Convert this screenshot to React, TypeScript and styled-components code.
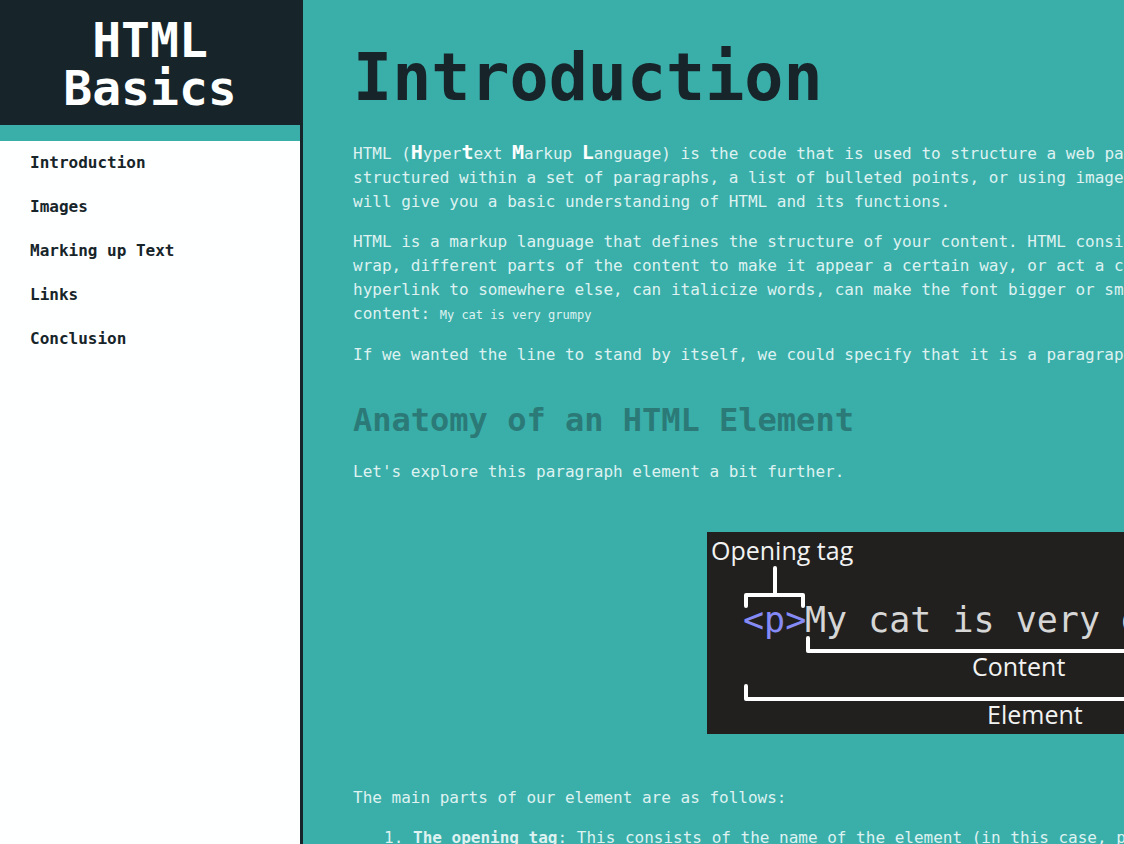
import React from "react";
import styled, { createGlobalStyle } from "styled-components";

const color = {
  ink: "#17252a",
  teal: "#3aafa9",
  deepTeal: "#2b7a78",
  mist: "#def2f1",
  paper: "#feffff",
};

const mono = `"DejaVu Sans Mono", "Liberation Mono", monospace`;

const GlobalStyle = createGlobalStyle`
  * { box-sizing: border-box; }
  body {
    margin: 0;
    background: ${color.teal};
    color: ${color.mist};
    font-family: ${mono};
    font-size: 16px;
    line-height: 24px;
  }
`;

const Page = styled.div`
  display: grid;
  grid-template-columns: 303px minmax(0, 1fr);
  height: 100vh;
`;

const Sidebar = styled.nav`
  background: ${color.paper};
  border-right: 3px solid ${color.ink};
`;

const SiteTitle = styled.header`
  padding: 16px 48px 13px;
  background: ${color.ink};
  border-bottom: 16px solid ${color.teal};
  color: ${color.paper};
  font-size: 48px;
  font-weight: 700;
  line-height: 48px;
  text-align: center;
`;

const NavLink = styled.a`
  display: block;
  padding: 10px 30px;
  color: ${color.ink};
  font-weight: 700;
  text-decoration: none;
`;

const Main = styled.main`
  padding: 30px 50px;
  overflow: auto;
  scrollbar-width: none;
`;

const Article = styled.article`
  min-width: 1336px;
`;

const Title = styled.h1`
  margin: 0 0 14px;
  color: ${color.ink};
  font-size: 65px;
  line-height: 96px;
`;

const Heading = styled.h2`
  margin: 30px 0 16px;
  color: ${color.deepTeal};
  font-size: 32px;
  line-height: 47px;
`;

const Text = styled.p`
  margin: 0 0 16px;
`;

const Initial = styled.strong`
  color: ${color.paper};
  font-size: 20px;
`;

const Code = styled.code`
  font-family: ${mono};
  font-size: 12px;
`;

const Figure = styled.figure`
  display: flex;
  justify-content: center;
  margin: 48px 0 52px;
`;

const Diagram = styled.svg`
  display: block;
  background: #21201e;
`;

const Label = styled.text`
  fill: #f2f2f2;
  font-family: "Open Sans", sans-serif;
  font-size: 25px;
`;

const Sample = styled.text<{ $tag?: boolean }>`
  fill: ${(p) => (p.$tag ? "#858af5" : "#d6d6d6")};
  font-family: ${mono};
  font-size: 35px;
`;

const Parts = styled.ol`
  margin: 0;
  padding-left: 60px;
`;

const links = [
  ["Introduction", "#introduction"],
  ["Images", "#images"],
  ["Marking up Text", "#marking-up-text"],
  ["Links", "#links"],
  ["Conclusion", "#conclusion"],
];

function ElementDiagram() {
  return (
    <Diagram width="628" height="202" viewBox="0 0 628 202" role="img" aria-label="Anatomy of a paragraph element">
      <Label x="4" y="28">Opening tag</Label>
      <Label x="478" y="28">Closing tag</Label>
      <Sample $tag x="36" y="100">&lt;p&gt;</Sample>
      <Sample x="98" y="100">My cat is very grumpy</Sample>
      <Sample $tag x="541" y="100">&lt;/p&gt;</Sample>
      <g fill="none" stroke="#ffffff" strokeWidth="4" strokeLinecap="round" strokeLinejoin="round">
        <path d="M68 36V63M39 74V63H96V74" />
        <path d="M582 36V63M543 74V63H622V74" />
        <path d="M101 106V119H538V106" />
        <path d="M39 154V167H622V154" />
      </g>
      <Label x="265" y="144">Content</Label>
      <Label x="280" y="192">Element</Label>
    </Diagram>
  );
}

export default function App() {
  return (
    <>
      <GlobalStyle />
      <Page>
        <Sidebar>
          <SiteTitle>HTML Basics</SiteTitle>
          {links.map(([label, href]) => (
            <NavLink key={href} href={href}>{label}</NavLink>
          ))}
        </Sidebar>
        <Main>
          <Article id="introduction">
            <Title>Introduction</Title>
            <Text>
              HTML (<Initial>H</Initial>yper<Initial>t</Initial>ext <Initial>M</Initial>arkup{" "}
              <Initial>L</Initial>anguage) is the code that is used to structure a web page and its
              content. For example, content could be structured within a set of paragraphs, a list of
              bulleted points, or using images and data tables. As the title suggests, this article
              will give you a basic understanding of HTML and its functions.
            </Text>
            <Text>
              HTML is a markup language that defines the structure of your content. HTML consists of a
              series of elements, which you use to enclose, or wrap, different parts of the content to
              make it appear a certain way, or act a certain way. The enclosing tags can make a word or
              image hyperlink to somewhere else, can italicize words, can make the font bigger or
              smaller, and so on. For example, take the following line of content:{" "}
              <Code>My cat is very grumpy</Code>
            </Text>
            <Text>
              If we wanted the line to stand by itself, we could specify that it is a paragraph by
              enclosing it in paragraph tags.
            </Text>
            <Heading>Anatomy of an HTML Element</Heading>
            <Text>Let's explore this paragraph element a bit further.</Text>
            <Figure>
              <ElementDiagram />
            </Figure>
            <Text>The main parts of our element are as follows:</Text>
            <Parts>
              <li>
                <strong>The opening tag</strong>: This consists of the name of the element (in this
                case, p), wrapped in opening and closing angle brackets. This states where the element
                begins or starts to take effect.
              </li>
              <li>
                <strong>The closing tag</strong>: This is the same as the opening tag, except that it
                includes a forward slash before the element name.
              </li>
            </Parts>
          </Article>
        </Main>
      </Page>
    </>
  );
}
